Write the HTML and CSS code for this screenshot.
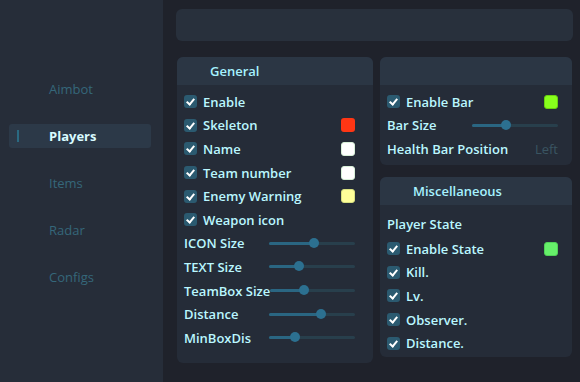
FILE: index.html
```html
<!DOCTYPE html>
<html lang="en">
<head>
  <meta charset="UTF-8">
  <title>Players</title>
  <link rel="stylesheet" href="styles.css">
</head>
<body>
  <div class="app">
    <aside class="sidebar">
      <nav class="nav">
        <div class="nav-item">Aimbot</div>
        <div class="nav-item active">Players</div>
        <div class="nav-item">Items</div>
        <div class="nav-item">Radar</div>
        <div class="nav-item">Configs</div>
      </nav>
    </aside>

    <main class="main">
      <div class="topbar"></div>

      <div class="columns">
        <section class="panel panel-general">
          <div class="panel-head">General</div>
          <div class="panel-body">
            <div class="row"><span class="check"></span>Enable</div>
            <div class="row"><span class="check"></span>Skeleton<span class="swatch red"></span></div>
            <div class="row"><span class="check"></span>Name<span class="swatch white"></span></div>
            <div class="row"><span class="check"></span>Team number<span class="swatch white"></span></div>
            <div class="row"><span class="check"></span>Enemy Warning<span class="swatch yellow"></span></div>
            <div class="row"><span class="check"></span>Weapon icon</div>
            <div class="row">ICON Size<div class="slider"><div class="fill" style="width: 52%"></div></div></div>
            <div class="row">TEXT Size<div class="slider"><div class="fill" style="width: 35%"></div></div></div>
            <div class="row">TeamBox Size<div class="slider"><div class="fill" style="width: 40%"></div></div></div>
            <div class="row">Distance<div class="slider"><div class="fill" style="width: 61%"></div></div></div>
            <div class="row">MinBoxDis<div class="slider"><div class="fill" style="width: 30%"></div></div></div>
          </div>
        </section>

        <div class="stack">
          <section class="panel panel-bar">
            <div class="panel-head"></div>
            <div class="panel-body">
              <div class="row"><span class="check"></span>Enable Bar<span class="swatch lime"></span></div>
              <div class="row">Bar Size<div class="slider"><div class="fill" style="width: 40%"></div></div></div>
              <div class="row">Health Bar Position<span class="value">Left</span></div>
            </div>
          </section>

          <section class="panel panel-misc">
            <div class="panel-head">Miscellaneous</div>
            <div class="panel-body">
              <div class="row row-title">Player State</div>
              <div class="row"><span class="check"></span>Enable State<span class="swatch green"></span></div>
              <div class="row"><span class="check"></span>Kill.</div>
              <div class="row"><span class="check"></span>Lv.</div>
              <div class="row"><span class="check"></span>Observer.</div>
              <div class="row"><span class="check"></span>Distance.</div>
            </div>
          </section>
        </div>
      </div>
    </main>
  </div>
</body>
</html>
```

FILE: styles.css
```css
body {
  margin: 0;
  background: #1f222b;
  font-family: 'Open Sans', 'Liberation Sans', sans-serif;
  font-size: 13px;
}

.app {
  display: flex;
  width: 580px;
  height: 382px;
  overflow: hidden;
}

.sidebar {
  width: 163px;
  flex-shrink: 0;
  background: #262d39;
}

.nav {
  display: flex;
  flex-direction: column;
  gap: 23px;
  padding: 77px 12px 0 9px;
}

.nav-item {
  position: relative;
  height: 24px;
  line-height: 24px;
  padding-left: 40px;
  color: #35677a;
  border-radius: 3px;
}

.nav-item.active {
  background: #2c3948;
  color: #d9fbff;
  font-weight: 700;
}

.nav-item.active::before {
  content: '';
  position: absolute;
  left: 8px;
  top: 6px;
  width: 2px;
  height: 12px;
  background: #2a6a82;
}

.main {
  flex: 1;
  padding: 9px 7px 0 13px;
}

.topbar {
  height: 32px;
  background: #28303c;
  border-radius: 6px;
}

.columns {
  display: grid;
  grid-template-columns: 196px 192px;
  gap: 7px;
  margin-top: 16px;
  padding-left: 1px;
}

.stack {
  display: flex;
  flex-direction: column;
  gap: 12px;
}

.panel {
  background: #252c38;
  border-radius: 6px;
  overflow: hidden;
  color: #baf7ff;
  font-weight: 600;
}

.panel-general { height: 306px; }
.panel-bar { height: 108px; }
.panel-misc { height: 180px; }

.panel-head {
  height: 28px;
  line-height: 28px;
  padding-left: 33px;
  background: #2b3644;
  color: #a6f2ff;
}

.panel-body {
  padding: 5px 18px 0 7px;
}

.panel-bar .panel-body { padding-right: 14px; }
.panel-misc .panel-body { padding: 7px 14px 0 7px; }

.row {
  display: flex;
  align-items: center;
  height: 23.6px;
  white-space: nowrap;
}

.row-title {
  margin-bottom: 1.4px;
}

.check {
  position: relative;
  width: 13px;
  height: 13px;
  margin-right: 6px;
  border-radius: 3px;
  background: #2b5a70;
  flex-shrink: 0;
}

.check::after {
  content: '';
  position: absolute;
  left: 4px;
  top: 2px;
  width: 3px;
  height: 6px;
  border: solid #fff;
  border-width: 0 2px 2px 0;
  transform: rotate(40deg);
}

.swatch {
  width: 14px;
  height: 14px;
  margin-left: auto;
  border-radius: 3px;
  box-sizing: border-box;
}

.swatch.red { background: #ff3614; }
.swatch.white { background: #ffffff; border: 1px solid #d8f0d8; }
.swatch.yellow { background: #ffff99; border: 1px solid #d8e080; }
.swatch.lime { background: #88ff1c; border: 1px solid #6ad010; }
.swatch.green { background: #66f06a; border: 1px solid #50d058; }

.slider {
  position: relative;
  width: 86px;
  height: 3px;
  margin-left: auto;
  background: #283f4c;
  border-radius: 2px;
}

.fill {
  position: relative;
  height: 3px;
  background: #2a6682;
  border-radius: 2px;
}

.fill::after {
  content: '';
  position: absolute;
  right: -5px;
  top: -4px;
  width: 10px;
  height: 10px;
  border-radius: 50%;
  background: #2c7090;
}

.value {
  margin-left: auto;
  color: #3a5562;
  font-weight: 400;
}
```
